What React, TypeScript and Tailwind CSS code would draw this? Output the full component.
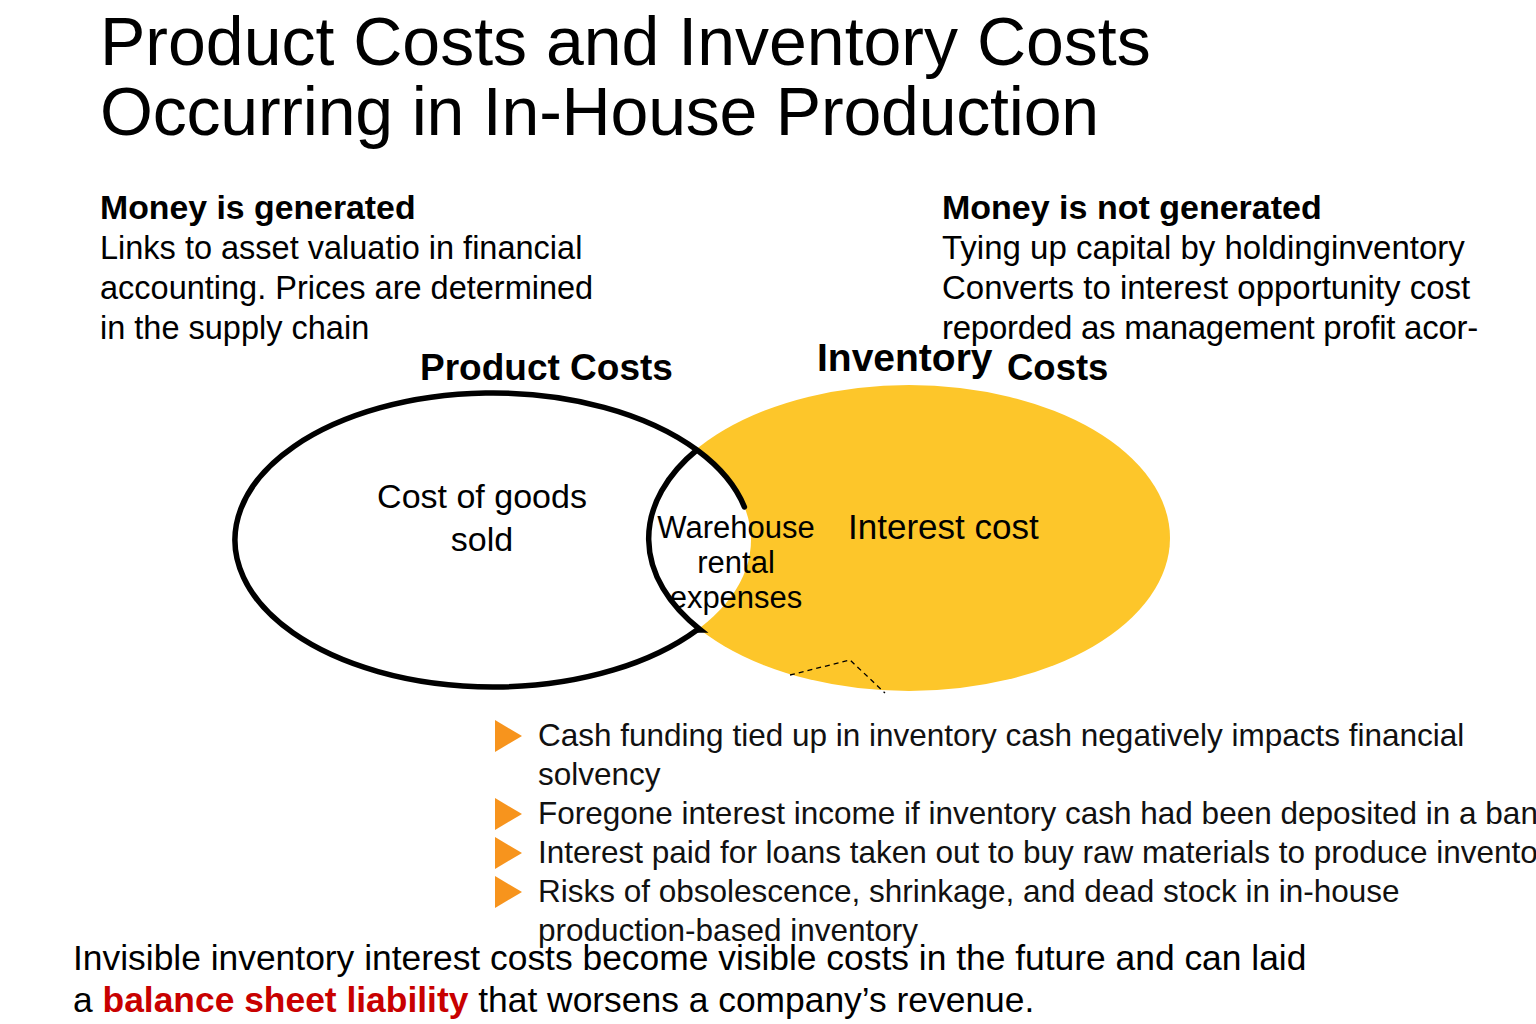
import React from "react";

const Tri = () => (
  <svg width="27" height="32" viewBox="0 0 27 32" className="shrink-0 mt-[4px]">
    <polygon points="0,0 27,16 0,32" fill="#F7941D" />
  </svg>
);

export default function App() {
  return (
    <div className="relative w-[1536px] h-[1024px] overflow-hidden bg-white text-black font-['Liberation_Sans',Arial,sans-serif]">
      {/* Title */}
      <h1 className="pl-[100px] pt-[6px] text-[68px] leading-[70px] font-normal whitespace-nowrap">
        <div>Product Costs and Inventory Costs</div>
        <div className="tracking-[-0.2px]">Occurring in In-House Production</div>
      </h1>

      {/* Two columns */}
      <div className="flex pl-[100px] mt-[40px] whitespace-nowrap">
        <div className="w-[842px]">
          <div className="text-[33.8px] leading-[42px] font-bold">Money is generated</div>
          <div className="text-[32.5px] leading-[40px]">
            <div>Links to asset valuatio in financial</div>
            <div>accounting. Prices are determined</div>
            <div>in the supply chain</div>
          </div>
        </div>
        <div>
          <div className="text-[34px] leading-[42px] font-bold">Money is not generated</div>
          <div className="text-[33px] leading-[40px]">
            <div>Tying up capital by holdinginventory</div>
            <div>Converts to interest opportunity cost</div>
            <div className="tracking-[-0.25px]">reporded as management profit acor-</div>
          </div>
        </div>
      </div>

      {/* Venn diagram */}
      <div className="relative h-[382px] mt-[-18px]">
        <svg
          width="1536"
          height="382"
          viewBox="0 330 1536 382"
          className="absolute left-0 top-0"
        >
          <ellipse cx="909" cy="538" rx="261" ry="153" fill="#FDC62A" />
          <ellipse cx="493" cy="540" rx="258" ry="147" fill="#ffffff" />
          <path
            d="M 744.4 507 A 258 147 0 1 0 697 630"
            fill="none"
            stroke="#000"
            strokeWidth="5.5"
            strokeLinecap="round"
          />
          <path
            d="M 698 449 A 261 153 0 0 0 700.5 630 L 697 630"
            fill="none"
            stroke="#000"
            strokeWidth="5.5"
            strokeLinejoin="miter"
          />
          <path
            d="M 790 675 L 850 660 L 885 693"
            fill="none"
            stroke="#000"
            strokeWidth="1.3"
            strokeDasharray="5 4"
          />
        </svg>

        <div className="absolute left-[420px] top-[18px] text-[37px] leading-[40px] font-bold whitespace-nowrap">
          Product Costs
        </div>
        <div className="absolute left-[817px] top-[8px] text-[39px] leading-[40px] font-bold whitespace-nowrap">
          Inventory
        </div>
        <div className="absolute left-[1007px] top-[18px] text-[36.5px] leading-[40px] font-bold whitespace-nowrap">
          Costs
        </div>
        <div className="absolute left-[332px] top-[145px] w-[300px] text-center text-[34px] leading-[43px] whitespace-nowrap">
          <div>Cost of goods</div>
          <div>sold</div>
        </div>
        <div className="absolute left-[636px] top-[180px] w-[200px] text-center text-[31px] leading-[35px] whitespace-nowrap">
          <div>Warehouse</div>
          <div>rental</div>
          <div>expenses</div>
        </div>
        <div className="absolute left-[848px] top-[177px] text-[35px] leading-[40px] whitespace-nowrap">
          Interest cost
        </div>
      </div>

      {/* Bullets */}
      <div className="mt-[4px] pl-[495px] text-[31.5px] leading-[39px] text-[#111] whitespace-nowrap">
        <div className="flex gap-[16px]">
          <Tri />
          <div>
            <div>Cash funding tied up in inventory cash negatively impacts financial</div>
            <div>solvency</div>
          </div>
        </div>
        <div className="flex gap-[16px]">
          <Tri />
          <div>Foregone interest income if inventory cash had been deposited in a bank</div>
        </div>
        <div className="flex gap-[16px]">
          <Tri />
          <div>Interest paid for loans taken out to buy raw materials to produce inventory</div>
        </div>
        <div className="flex gap-[16px]">
          <Tri />
          <div>
            <div>Risks of obsolescence, shrinkage, and dead stock in in-house</div>
            <div>production-based inventory</div>
          </div>
        </div>
      </div>

      {/* Bottom text */}
      <div className="relative mt-[-13px] pl-[73px] text-[35.4px] leading-[42px] whitespace-nowrap">
        <div>Invisible inventory interest costs become visible costs in the future and can laid</div>
        <div>
          a <span className="font-bold text-[#C80000]">balance sheet liability</span> that worsens a company’s revenue.
        </div>
      </div>
    </div>
  );
}
